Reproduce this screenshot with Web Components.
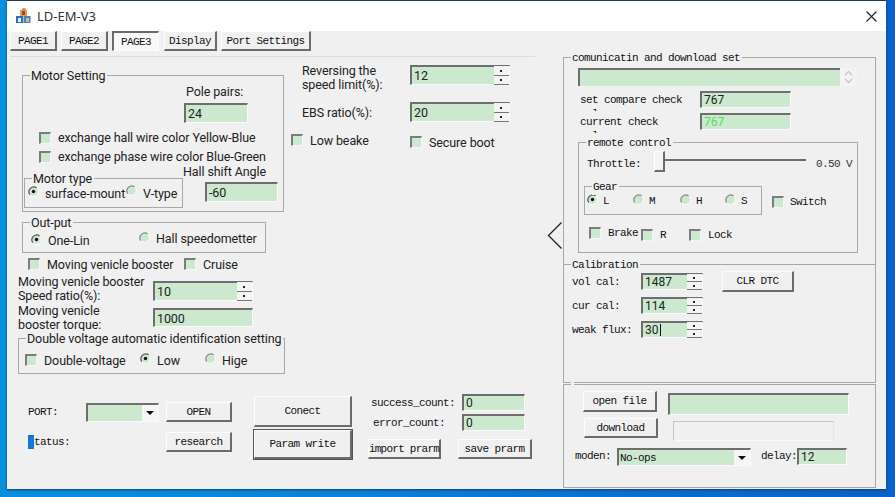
<!DOCTYPE html>
<html>
<head>
<meta charset="utf-8">
<title>LD-EM-V3</title>
<style>
  html, body { margin: 0; height: 100%; overflow: hidden; }
  body { background: linear-gradient(90deg, #0a8fdc 0, #0b86d8 30%, #0b6fcf 70%, #0a5fc8 100%); }
</style>
</head>
<body>
<ld-window>
  <ld-tabs></ld-tabs>
  <ld-left-pane></ld-left-pane>
  <ld-chevron></ld-chevron>
  <ld-right-pane></ld-right-pane>
</ld-window>

<script>
const GREEN = '#cce8cf';
const SANS = '12.5px Roboto, "Noto Sans", sans-serif';

class Base extends HTMLElement {
    constructor() {
        super();
        this.attachShadow({ mode: 'open' });
        this.shadowRoot.innerHTML = this.constructor.markup;
    }
}

const sunken = `
    background: ${GREEN};
    border-style: solid;
    border-width: 2px 1px 1px 2px;
    border-color: #6e6e6e #fafafa #fafafa #6e6e6e;
    box-sizing: border-box;
`;

class LdButton extends Base {
    static markup = `
    <style>
        :host {
            display: inline-flex;
            align-items: center;
            justify-content: center;
            box-sizing: border-box;
            background: #f0f0f0;
            border-style: solid;
            border-width: 1px 2px 2px 1px;
            border-color: #fdfdfd #6b6b6b #6b6b6b #fdfdfd;
            font: 11px "Liberation Mono", monospace;
            letter-spacing: -0.6px;
            color: #111;
            white-space: nowrap;
        }
        :host([pressed]) {
            background: #f9f9f9;
            border-width: 2px 1px 1px 2px;
            border-color: #6b6b6b #fdfdfd #fdfdfd #6b6b6b;
        }
        :host([focused]) {
            outline: 1px solid #555;
        }
    </style>
    <slot></slot>`;
}

class LdField extends Base {
    static markup = `
    <style>
        :host {
            display: inline-flex;
            align-items: center;
            ${sunken}
            padding-left: 2px;
            font: ${SANS};
            color: #222;
            white-space: nowrap;
        }
    </style>
    <slot></slot>`;
}

class LdSpin extends Base {
    static markup = `
    <style>
        :host {
            display: inline-flex;
            ${sunken}
            font: ${SANS};
            color: #222;
        }
        .val { flex: 1; display: flex; align-items: center; padding-left: 2px; white-space: nowrap; }
        .arrows { width: 15px; display: flex; flex-direction: column; background: #f4f4f4; margin: -1px 0 -1px 0; }
        .arrows div { flex: 1; border-bottom: 1px solid #777; position: relative; }
        .arrows div::after {
            content: ""; position: absolute; left: 6px; top: 45%;
            width: 2px; height: 2px; background: #222;
        }
    </style>
    <div class="val"><slot></slot></div>
    <div class="arrows"><div></div><div></div></div>`;
}

class LdCombo extends Base {
    static markup = `
    <style>
        :host {
            display: inline-flex;
            ${sunken}
            font: 11px "Liberation Mono", monospace;
            letter-spacing: -0.6px;
            color: #111;
        }
        .val { flex: 1; display: flex; align-items: center; padding-left: 1px; }
        .drop { width: 16px; background: #f5f5f5; display: flex; align-items: center; justify-content: center; }
        .drop::after {
            content: ""; border-style: solid; border-width: 4px 4px 0 4px;
            border-color: #111 transparent transparent transparent;
        }
    </style>
    <div class="val"><slot></slot></div>
    <div class="drop"></div>`;
}

class LdCheck extends Base {
    static markup = `
    <style>
        :host {
            display: inline-flex;
            align-items: center;
            gap: 7px;
            white-space: nowrap;
        }
        .box {
            width: 12px; height: 12px; flex: none;
            ${sunken}
            border-color: #7c7c7c #f6f6f6 #f6f6f6 #7c7c7c;
        }
    </style>
    <span class="box"></span><slot></slot>`;
}

class LdRadio extends Base {
    static markup = `
    <style>
        :host {
            display: inline-flex;
            align-items: center;
            gap: 6px;
            white-space: nowrap;
        }
        svg { width: 11px; height: 11px; flex: none; margin-top: -3px; }
        .dot { display: none; }
        :host([checked]) .dot { display: block; }
        :host([checked]) .arc { stroke: #555; }
    </style>
    <svg viewBox="0 0 11 11">
        <circle cx="5.5" cy="5.5" r="4.5" fill="${GREEN}"/>
        <path d="M9 9A5 5 0 0 0 9 2M9 9A5 5 0 0 1 2 9" fill="none" stroke="#fafafa" stroke-width="1"/>
        <path class="arc" d="M1.7 8.6A5 5 0 0 1 8.6 1.7" fill="none" stroke="#888" stroke-width="1.2"/>
        <circle class="dot" cx="5.5" cy="5.5" r="1.7" fill="#111"/>
    </svg><slot></slot>`;
}

class LdGroup extends Base {
    static markup = `
    <style>
        :host {
            display: block;
            position: relative;
            box-sizing: border-box;
            border: 1px solid #a8a8a8;
        }
        .title {
            position: absolute;
            left: 7px;
            top: var(--title-top, -8px);
            height: 15px;
            line-height: 15px;
            padding: 0 2px 0 1px;
            background: #f0f0f0;
            white-space: nowrap;
        }
    </style>
    <div class="title"><slot name="title"></slot></div>
    <slot></slot>`;
}

class LdChevron extends Base {
    static markup = `
    <style>
        :host { display: block; width: 16px; margin-top: 171px; }
        svg { display: block; }
    </style>
    <svg width="16" height="27" viewBox="0 0 16 27"><path d="M14.5 0.5L1.5 13.5L14.5 26.5" fill="none" stroke="#1f1f1f" stroke-width="1.3"/></svg>`;
}

class LdWindow extends Base {
    static markup = `
    <style>
        :host {
            display: block;
            width: 879px;
            height: 488px;
            margin: 1px 0 0 7px;
            background: #f0f0f0;
            box-shadow: 0 -1px 0 #1d3f55, 0 1px 2px #0a3d6a;
        }
        header {
            height: 30px;
            background: #fff;
            display: flex;
            align-items: center;
            padding-left: 9px;
            font: 13px "Noto Sans", sans-serif;
            color: #333;
        }
        header svg.logo { margin-right: 6px; }
        header span { flex: 1; }
        header svg.close { margin-right: 9px; }
        main { display: grid; grid-template-columns: 540px 16px 1fr; grid-template-rows: auto 1fr; }
        ::slotted(ld-tabs) { grid-column: 1 / 4; }
    </style>
    <header>
        <svg class="logo" width="15" height="16" viewBox="0 0 15 16">
            <path d="M6 1l2-1 2 1v3H6z" fill="#b5834f"/>
            <rect x="4" y="2" width="7" height="6" fill="#d8a15c"/>
            <rect x="6" y="3" width="3" height="4" fill="#c9302c"/>
            <rect x="0" y="8" width="7" height="7" fill="#2f6fb0"/>
            <rect x="7.500" y="8" width="7" height="7" fill="#3f86c6"/>
            <rect x="2" y="10" width="3" height="4" fill="#e8f0f6"/>
            <rect x="10" y="10" width="3" height="4" fill="#e4b56c"/>
        </svg>
        <span>LD-EM-V3</span>
        <svg class="close" width="11" height="11" viewBox="0 0 11 11"><path d="M0.500 0.500L10.500 10.500M10.500 0.500L0.500 10.500" stroke="#222" stroke-width="1.100"/></svg>
    </header>
    <main><slot></slot></main>`;
}

class LdTabs extends Base {
    static markup = `
    <style>
        :host { display: flex; gap: 4px; padding-left: 3px; height: 20px; }
        ld-button { height: 20px; width: 47px; }
        .display { width: 53px; }
        .port { width: 90px; }
    </style>
    <ld-button>PAGE1</ld-button>
    <ld-button>PAGE2</ld-button>
    <ld-button pressed>PAGE3</ld-button>
    <ld-button class="display" style="margin-left:1px">Display</ld-button>
    <ld-button class="port">Port Settings</ld-button>`;
}

class LdLeftPane extends Base {
    static markup = `
    <style>
        :host {
            display: block;
            font: ${SANS};
            letter-spacing: -0.1px;
            color: #222;
        }
        .rule { height: 1px; background: #dcdcdc; margin: 5px 12px 0 3px; }
        .upper { display: flex; height: 316px; }
        .col-a { margin-left: 11px; width: 266px; }
        .col-b { margin-left: 7px; }
        .row { display: flex; }
        .two { line-height: 14px; white-space: nowrap; }

        .motor { margin: 18px 0 0 4px; width: 262px; height: 137px; }
        .pole { margin: 8px 0 0 163px; height: 16px; line-height: 16px; }
        .pole-val { margin: 3px 0 0 161px; width: 64px; height: 20px; }
        .motor ld-check { display: flex; height: 19px; margin-left: 16px; }
        .swap { margin-top: 5px; }
        .type { margin: 12px 0 0 1px; width: 159px; height: 30px; }
        .type-row { display: flex; align-items: center; height: 28px; padding-left: 3px; }
        .hall { margin-top: -1px; }
        .hall-l { height: 14px; line-height: 14px; white-space: nowrap; }
        .hall-val { margin: 3px 0 0 22px; width: 73px; height: 20px; }

        .output { margin: 10px 0 0 4px; width: 244px; height: 31px; }
        .output-row { display: flex; height: 29px; padding-left: 8px; }
        .one { margin-top: 9px; width: 108px; height: 17px; }
        .speedo { margin-top: 7px; height: 17px; }

        .moving { margin: 2px 0 0 10px; height: 18px; align-items: center; }
        .moving ld-check:first-child { width: 156px; }
        .booster { margin-top: 2px; }
        .booster .two { width: 135px; }
        .booster ld-spin { margin-top: 6px; width: 100px; height: 20px; }
        .torque { margin-top: 1px; }
        .torque .two { width: 135px; }
        .torque ld-field { margin-top: 4px; width: 100px; height: 19px; }

        .double { margin-top: 6px; width: 267px; height: 36px; }
        .double-row { display: flex; align-items: center; height: 18px; margin-top: 12px; padding-left: 6px; }
        .double-row .dv { width: 115px; }
        .double-row .lo { width: 65px; }

        .rev { padding-top: 7px; margin-left: 11px; }
        .rev .two, .ebs .lab { width: 108px; }
        .rev ld-spin { margin-top: 1px; width: 100px; height: 20px; align-self: flex-start; }
        .ebs { margin: 10px 0 0 11px; height: 20px; align-items: center; }
        .ebs ld-spin { width: 100px; height: 20px; }
        .flags { margin-top: 11px; }
        .flags ld-check:first-child { width: 119px; height: 14px; }
        .flags ld-check:last-child { margin-top: 2px; height: 14px; }

        .lower {
            display: flex;
            margin: 21px 0 0 21px;
            font: 11px "Liberation Mono", monospace;
            letter-spacing: -0.6px;
            color: #111;
        }
        .c1 { width: 204px; padding-top: 8px; }
        .c1 .row { align-items: center; height: 20px; }
        .port-l { width: 58px; }
        .c1 ld-combo { width: 73px; height: 19px; margin-right: 7px; }
        .c1 ld-button { width: 66px; height: 20px; }
        .status { width: 138px; }
        .status b { font-weight: normal; background: #1278d8; color: #1278d8; padding: 1px 0; }
        .c2 { margin: 2px 0 0 22px; }
        .c2 ld-button { display: flex; width: 98px; }
        .c3 { margin-left: 16px; }
        .count { align-items: center; }
        .count span { width: 94px; }
        .count ld-field { width: 63px; height: 17px; font-size: 12px; }
        .saves { margin-top: 8px; }
        .saves ld-button { width: 73px; height: 20px; }
    </style>
    <div class="rule"></div>
    <div class="upper">
        <div class="col-a">
            <ld-group class="motor">
                <span slot="title">Motor Setting</span>
                <div class="pole">Pole pairs:</div>
                <ld-field class="pole-val" style="display:flex">24</ld-field>
                <ld-check class="swap">exchange hall wire color Yellow-Blue</ld-check>
                <ld-check>exchange phase wire color Blue-Green</ld-check>
                <div class="row">
                    <ld-group class="type">
                        <span slot="title">Motor type</span>
                        <div class="type-row">
                            <ld-radio checked style="width:98px">surface-mount</ld-radio>
                            <ld-radio style="margin-top:-2px"><span style="margin-top:2px">V-type</span></ld-radio>
                        </div>
                    </ld-group>
                    <div class="hall">
                        <div class="hall-l">Hall shift Angle</div>
                        <ld-field class="hall-val">-60</ld-field>
                    </div>
                </div>
            </ld-group>
            <ld-group class="output">
                <span slot="title">Out-put</span>
                <div class="output-row">
                    <ld-radio checked class="one">One-Lin</ld-radio>
                    <ld-radio class="speedo">Hall speedometter</ld-radio>
                </div>
            </ld-group>
            <div class="row moving">
                <ld-check>Moving venicle booster</ld-check>
                <ld-check>Cruise</ld-check>
            </div>
            <div class="row booster">
                <div class="two">Moving venicle booster<br>Speed ratio(%):</div>
                <ld-spin>10</ld-spin>
            </div>
            <div class="row torque">
                <div class="two">Moving venicle<br>booster torque:</div>
                <ld-field>1000</ld-field>
            </div>
            <ld-group class="double">
                <span slot="title">Double voltage automatic identification setting</span>
                <div class="double-row">
                    <ld-check class="dv">Double-voltage</ld-check>
                    <ld-radio checked class="lo">Low</ld-radio>
                    <ld-radio>Hige</ld-radio>
                </div>
            </ld-group>
        </div>
        <div class="col-b">
            <div class="row rev">
                <div class="two">Reversing the<br>speed limit(%):</div>
                <ld-spin>12</ld-spin>
            </div>
            <div class="row ebs">
                <div class="lab">EBS ratio(%):</div>
                <ld-spin>20</ld-spin>
            </div>
            <div class="row flags">
                <ld-check>Low beake</ld-check>
                <ld-check>Secure boot</ld-check>
            </div>
        </div>
    </div>
    <div class="lower">
        <div class="c1">
            <div class="row">
                <span class="port-l">PORT:</span>
                <ld-combo></ld-combo>
                <ld-button>OPEN</ld-button>
            </div>
            <div class="row" style="margin-top:10px">
                <span class="status"><b>S</b>tatus:</span>
                <ld-button>research</ld-button>
            </div>
        </div>
        <div class="c2">
            <ld-button style="height:31px">Conect</ld-button>
            <ld-button focused style="height:29px;margin-top:3px">Param write</ld-button>
        </div>
        <div class="c3">
            <div class="row count"><span style="padding-left:3px;width:91px">success_count:</span><ld-field>0</ld-field></div>
            <div class="row count" style="margin-top:3px"><span style="padding-left:5px;width:89px">error_count:</span><ld-field>0</ld-field></div>
            <div class="row saves">
                <ld-button style="letter-spacing:-0.75px">import prarm</ld-button>
                <ld-button style="margin-left:17px;width:74px">save prarm</ld-button>
            </div>
        </div>
    </div>`;
}

class LdRightPane extends Base {
    static markup = `
    <style>
        :host {
            display: block;
            width: 313px;
            margin-top: 6px;
            font: 11px "Liberation Mono", monospace;
            letter-spacing: -0.6px;
            color: #111;
            --title-top: -7px;
        }
        .row { display: flex; }
        .comm { height: 207px; border-bottom: 0; }
        .memo { display: flex; margin: 10px 0 0 14px; width: 279px; height: 18px; }
        .memo div { flex: 1; ${sunken} border-right: 0; border-bottom: 0; }
        .memo svg { display: block; width: 17px; height: 18px; background: #f3f3f3; }
        .check { margin: 5px 0 0 16px; height: 17px; }
        .check .lab { width: 104px; margin: 2px 16px 0 0; height: 18px; overflow: hidden; line-height: 14px; }
        .check ld-field { width: 91px; height: 17px; font-size: 12px; letter-spacing: 0; }
        .hit { color: #4fe04f !important; }

        .remote { margin: 12px 0 0 14px; width: 280px; height: 111px; }
        .throttle { margin-top: 8px; height: 21px; padding-left: 8px; }
        .throttle > span { width: 67px; margin-top: 7px; }
        .slider { width: 152px; height: 21px; display: flex; align-items: center; }
        .thumb {
            width: 11px; height: 21px; box-sizing: border-box; background: #f4f4f4;
            border-style: solid; border-width: 1px 2px 2px 1px;
            border-color: #fff #6b6b6b #6b6b6b #fff;
        }
        .track { flex: 1; height: 2px; background: #6d6d6d; margin-top: -3px; }
        .volts { margin: 9px 0 0 10px; color: #333; }

        .gears { margin-top: 14px; }
        .gear { margin-left: 5px; width: 178px; height: 29px; }
        .gear-row { display: grid; grid-template-columns: 46px 47px 45px 1fr; height: 18px; margin-top: 5px; padding-left: 2px; }
        .gear-row ld-radio { gap: 5px; }
        .switch { margin: 7px 0 0 10px; height: 18px; gap: 6px; }
        .bottom { margin: 11px 0 0 10px; align-items: flex-start; }
        .bottom ld-check { height: 14px; gap: 7px; }
        .lowered { margin-top: 2px; }

        .cal { height: 119px; }
        .cal-body { display: flex; padding-top: 8px; }
        .cal-rows { display: grid; grid-template-columns: 69px 62px; row-gap: 7px; padding-left: 8px; align-items: center; }
        .cal-rows ld-spin { height: 17px; font-size: 12px; letter-spacing: 0; }
        .cal ld-button { width: 72px; height: 21px; margin: -2px 0 0 19px; }
        .caret { display: inline-block; width: 1px; height: 12px; background: #111; margin-left: 1px; }

        .files { margin-top: 1px; height: 104px; }
        .f1 { margin: 6px 0 0 19px; }
        .f1 ld-button { width: 74px; height: 21px; }
        .f1 ld-field { width: 181px; height: 22px; margin: 2px 0 0 11px; }
        .f2 { margin: 3px 0 0 20px; }
        .f2 ld-button { width: 74px; height: 20px; }
        .blank { width: 161px; height: 20px; margin: 3px 0 0 15px; box-sizing: border-box; border: 1px solid #d4d4d4; border-color: #c4c4c4 #e4e4e4 #fafafa #c4c4c4; }
        .f3 { margin: 7px 0 0 11px; }
        .f3 .moden { width: 42px; line-height: 16px; }
        .f3 ld-combo { width: 134px; height: 18px; }
        .f3 .delay { margin-left: 10px; width: 36px; line-height: 16px; }
        .f3 ld-field { width: 50px; height: 17px; font-size: 12px; letter-spacing: 0; }
    </style>
    <ld-group class="comm">
        <span slot="title">comunicatin and download set</span>
        <div class="memo">
            <div></div>
            <svg viewBox="0 0 17 18"><path d="M5 7l3.500-3.500L12 7M5 11l3.500 3.500L12 11" fill="none" stroke="#c2c8c4" stroke-width="1.400"/></svg>
        </div>
        <div class="row check">
            <div class="lab">set compare check value</div>
            <ld-field>767</ld-field>
        </div>
        <div class="row check">
            <div class="lab">current check value</div>
            <ld-field><span class="hit">767</span></ld-field>
        </div>
        <ld-group class="remote">
            <span slot="title">remote control</span>
            <div class="row throttle">
                <span>Throttle:</span>
                <div class="slider"><div class="thumb"></div><div class="track"></div></div>
                <span class="volts" style="width:auto">0.50 V</span>
            </div>
            <div class="row gears">
                <ld-group class="gear">
                    <span slot="title">Gear</span>
                    <div class="gear-row">
                        <ld-radio checked>L</ld-radio>
                        <ld-radio>M</ld-radio>
                        <ld-radio>H</ld-radio>
                        <ld-radio>S</ld-radio>
                    </div>
                </ld-group>
                <ld-check class="switch">Switch</ld-check>
            </div>
            <div class="row bottom">
                <ld-check style="width:52px">Brake</ld-check>
                <ld-check class="lowered" style="width:48px">R</ld-check>
                <ld-check class="lowered">Lock</ld-check>
            </div>
        </ld-group>
    </ld-group>
    <ld-group class="cal">
        <span slot="title">Calibration</span>
        <div class="cal-body">
            <div class="cal-rows">
                <span>vol cal:</span><ld-spin>1487</ld-spin>
                <span>cur cal:</span><ld-spin>114</ld-spin>
                <span>weak flux:</span><ld-spin>30<i class="caret"></i></ld-spin>
            </div>
            <ld-button>CLR DTC</ld-button>
        </div>
    </ld-group>
    <ld-group class="files">
        <div class="row f1">
            <ld-button>open file</ld-button>
            <ld-field></ld-field>
        </div>
        <div class="row f2">
            <ld-button>download</ld-button>
            <div class="blank"></div>
        </div>
        <div class="row f3">
            <span class="moden">moden:</span>
            <ld-combo>No-ops</ld-combo>
            <span class="delay">delay:</span>
            <ld-field>12</ld-field>
        </div>
    </ld-group>`;
}

customElements.define('ld-button', LdButton);
customElements.define('ld-field', LdField);
customElements.define('ld-spin', LdSpin);
customElements.define('ld-combo', LdCombo);
customElements.define('ld-check', LdCheck);
customElements.define('ld-radio', LdRadio);
customElements.define('ld-group', LdGroup);
customElements.define('ld-chevron', LdChevron);
customElements.define('ld-tabs', LdTabs);
customElements.define('ld-left-pane', LdLeftPane);
customElements.define('ld-right-pane', LdRightPane);
customElements.define('ld-window', LdWindow);
</script>
</body>
</html>
